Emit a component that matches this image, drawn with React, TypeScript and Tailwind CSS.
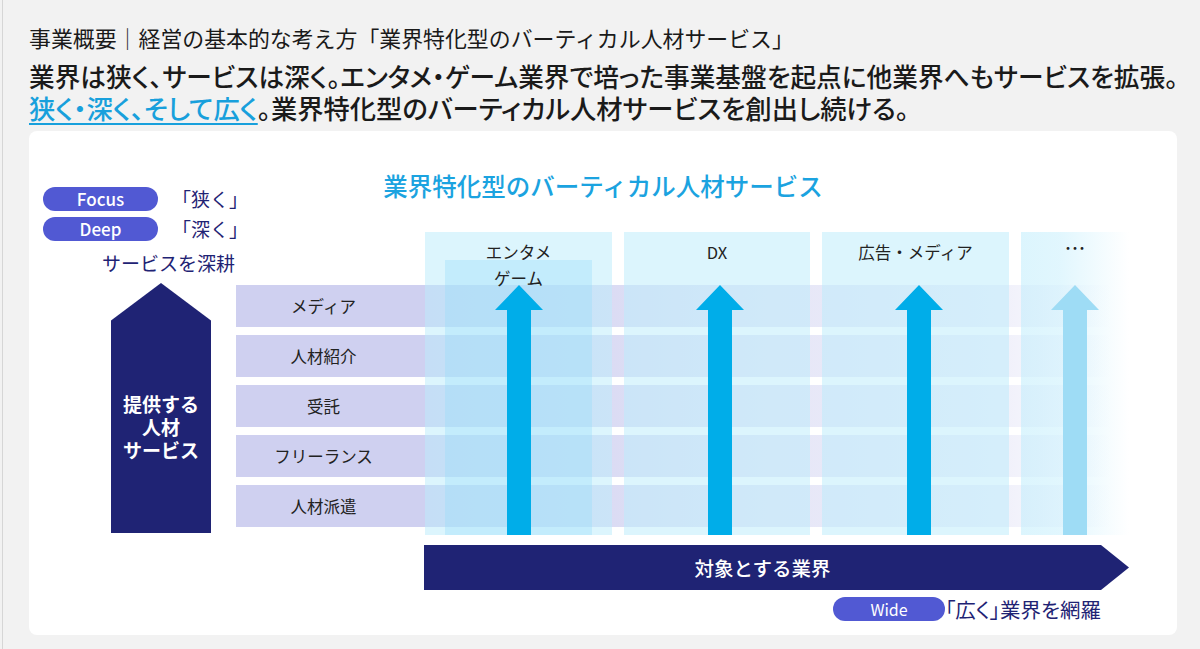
import React from 'react';

const ROWS = ['メディア', '人材紹介', '受託', 'フリーランス', '人材派遣'];

function UpArrow({ color }: { color: string }) {
  return (
    <svg width="48" height="250" viewBox="0 0 48 250" className="block">
      <path d="M24 0 L48 25 L36 25 L36 250 L12 250 L12 25 L0 25 Z" fill={color} />
    </svg>
  );
}

function Pill({ label }: { label: string }) {
  return (
    <div className="shrink-0 w-[115px] h-[24px] rounded-full bg-[#5159d3] text-white text-[17px] font-medium flex items-center justify-center">
      {label}
    </div>
  );
}

export default function App() {
  return (
    <div className="w-[1200px] h-[649px] bg-[#f2f2f2] overflow-hidden font-['Noto_Sans_CJK_JP',sans-serif] text-[#1a1a1a]">
      <div className="ml-[2px] h-full border-l border-[#d6d6d6] pl-[26px] pt-[24px]">
        {/* heading */}
        <p className="text-[21.9px] leading-[28px] whitespace-nowrap">
          事業概要<span className="text-[#333]">｜</span>経営の基本的な考え方「業界特化型のバーティカル人材サービス」
        </p>
        <p className="mt-[8px] text-[25.7px] leading-[32px] font-medium whitespace-nowrap [font-feature-settings:'palt']">
          業界は狭く、サービスは深く。エンタメ・ゲーム業界で培った事業基盤を起点に他業界へもサービスを拡張。
        </p>
        <p className="text-[26.3px] leading-[31px] font-medium whitespace-nowrap [font-feature-settings:'palt']">
          <span className="text-[#18a0dc] underline decoration-[1.5px] underline-offset-[4px]">狭く・深く、そして広く</span>
          。業界特化型のバーティカル人材サービスを創出し続ける。
        </p>

        {/* card */}
        <div className="mt-[8px] w-[1148px] h-[504px] bg-white rounded-lg px-[14px] grid grid-cols-[193px_1fr]">
          <h2 className="col-start-1 col-end-3 row-start-1 self-start mt-[40px] text-center text-[24.5px] leading-[30px] font-medium text-[#1ba3e0]">
            業界特化型のバーティカル人材サービス
          </h2>

          {/* left: focus / deep */}
          <div className="col-start-1 row-start-1 flex flex-col pt-[56px] text-[#1f2374]">
            <div className="flex items-center gap-[14px]">
              <Pill label="Focus" />
              <span className="text-[19px] leading-[24px] whitespace-nowrap">「狭く」</span>
            </div>
            <div className="mt-[6px] flex items-center gap-[14px]">
              <Pill label="Deep" />
              <span className="text-[19px] leading-[24px] whitespace-nowrap">「深く」</span>
            </div>
            <p className="mt-[10px] ml-[59px] text-[19px] leading-[24px] whitespace-nowrap">サービスを深耕</p>
            <div className="mt-[8px] ml-[68px] w-[100px] h-[250px] bg-[#1f2374] [clip-path:polygon(50%_0,100%_15%,100%_100%,0_100%,0_15%)] flex flex-col items-center justify-center pt-[36px] text-white text-[19px] leading-[23px] font-bold text-center">
              <span>提供する</span>
              <span>人材</span>
              <span>サービス</span>
            </div>
          </div>

          {/* right: diagram */}
          <div className="col-start-2 row-start-1 flex flex-col pt-[101px]">
            <div className="grid h-[303px]">
              {/* service rows */}
              <div className="col-start-1 row-start-1 flex flex-col gap-[8px] pt-[53px]">
                {ROWS.map((r) => (
                  <div
                    key={r}
                    className="h-[42px] w-[875px] flex items-center bg-[linear-gradient(to_right,#cfd0f0_0%,#cfd0f0_22%,rgba(207,208,240,0.55)_60%,rgba(207,208,240,0.3)_88%,rgba(207,208,240,0)_100%)]"
                  >
                    <span className="w-[175px] text-center text-[16.5px] text-[#222]">{r}</span>
                  </div>
                ))}
              </div>

              {/* industry columns */}
              <div className="col-start-1 row-start-1 flex gap-[12px] ml-[189px] text-[16.5px] text-[#222]">
                <div className="w-[187px] grid bg-[rgba(188,236,252,0.52)]">
                  <div className="col-start-1 row-start-1 mt-[28px] mx-[20px] bg-[rgba(150,222,248,0.35)]" />
                  <div className="col-start-1 row-start-1 self-start justify-self-center mt-[7px] text-center leading-[26px]">
                    エンタメ<br />ゲーム
                  </div>
                  <div className="col-start-1 row-start-1 self-end justify-self-center">
                    <UpArrow color="#00ade9" />
                  </div>
                </div>
                <div className="w-[186px] grid bg-[rgba(188,236,252,0.52)]">
                  <div className="col-start-1 row-start-1 self-start justify-self-center mt-[7px] leading-[26px]">DX</div>
                  <div className="col-start-1 row-start-1 self-end justify-self-center ml-[5px]">
                    <UpArrow color="#00ade9" />
                  </div>
                </div>
                <div className="w-[187px] grid bg-[rgba(188,236,252,0.52)]">
                  <div className="col-start-1 row-start-1 self-start justify-self-center mt-[7px] leading-[26px] whitespace-nowrap">広告・メディア</div>
                  <div className="col-start-1 row-start-1 self-end justify-self-center ml-[6px]">
                    <UpArrow color="#00ade9" />
                  </div>
                </div>
                <div className="w-[108px] grid bg-[linear-gradient(to_right,rgba(188,236,252,0.52)_0%,rgba(188,236,252,0.45)_35%,rgba(188,236,252,0)_100%)]">
                  <div className="col-start-1 row-start-1 self-start justify-self-center mt-[2px] text-[21px] leading-[26px]">…</div>
                  <div className="col-start-1 row-start-1 self-end justify-self-center">
                    <UpArrow color="#9edcf5" />
                  </div>
                </div>
              </div>
            </div>

            {/* target industries bar */}
            <div className="mt-[10px] ml-[188px] w-[705px] h-[45px] bg-[#1f2374] [clip-path:polygon(0_0,calc(100%-28px)_0,100%_50%,calc(100%-28px)_100%,0_100%)] flex items-center justify-center pr-[28px] text-white text-[19.5px] font-medium">
              対象とする業界
            </div>

            <div className="mt-[7px] ml-[597px] flex items-center">
              <div className="shrink-0 w-[112px] h-[24px] rounded-full bg-[#5159d3] text-white text-[16px] flex items-center justify-center">
                Wide
              </div>
              <span className="text-[20.5px] leading-[24px] text-[#1f2374] whitespace-nowrap [font-feature-settings:'palt']">「広く」業界を網羅</span>
            </div>
          </div>
        </div>
      </div>
    </div>
  );
}
